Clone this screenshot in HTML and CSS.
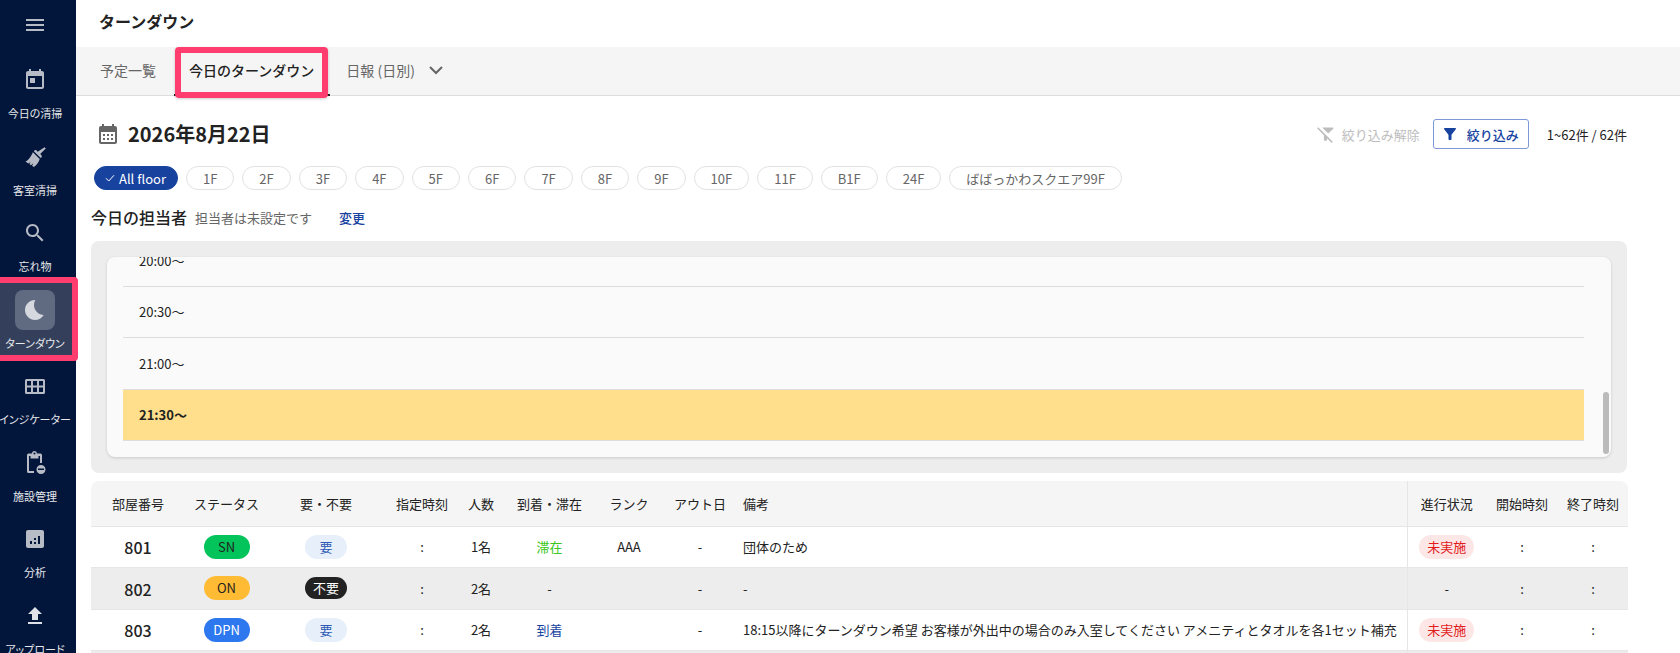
FILE: index.html
```html
<!DOCTYPE html>
<html lang="ja">
<head>
    <meta charset="UTF-8">
    <title>ターンダウン</title>
    <link rel="stylesheet" href="styles.css">
</head>

<body>
<div class="app">
    <nav class="side">
        <div class="side-menu">
            <svg viewBox="0 0 24 24" width="24" height="24"><path d="M3 18h18v-2H3v2zm0-5h18v-2H3v2zm0-7v2h18V6H3z"/></svg>
        </div>
        <a class="side-item">
            <span class="side-icon"><svg viewBox="0 0 24 24" width="24" height="24"><path d="M19 3h-1V1h-2v2H8V1H6v2H5c-1.11 0-2 .9-2 2v14c0 1.1.89 2 2 2h14c1.1 0 2-.9 2-2V5c0-1.1-.9-2-2-2zm0 16H5V8h14v11zM7 10h5v5H7z"/></svg></span>
            <span class="side-label">今日の清掃</span>
        </a>
        <a class="side-item">
            <span class="side-icon"><svg viewBox="0 0 24 24" width="24" height="24"><path d="M21.5 2.2l1.3 1.3-5.6 5.6 1.2 1.2c.6.6.6 1.5 0 2.1l-.7.7-6.9-6.9.7-.7c.6-.6 1.5-.6 2.1 0l1.2 1.2zM9.9 7.3l6.8 6.8c-.7 3.2-3.2 6.4-5.9 7.9l-1.7-1.3 1.3-2.4-2.5 1.9-1.5-1.1 1.3-2.2-2.4 1.6-2.8-2.1c2.3-.7 5.2-3.8 7.4-9.1z"/></svg></span>
            <span class="side-label">客室清掃</span>
        </a>
        <a class="side-item">
            <span class="side-icon"><svg viewBox="0 0 24 24" width="24" height="24"><path d="M15.5 14h-.79l-.28-.27C15.41 12.59 16 11.11 16 9.5 16 5.91 13.09 3 9.5 3S3 5.91 3 9.5 5.91 16 9.5 16c1.61 0 3.09-.59 4.23-1.57l.27.28v.79l5 4.99L20.49 19l-4.99-5zm-6 0C7.01 14 5 11.99 5 9.5S7.01 5 9.5 5 14 7.01 14 9.5 11.99 14 9.5 14z"/></svg></span>
            <span class="side-label">忘れ物</span>
        </a>
        <a class="side-item active">
            <span class="side-icon"><svg viewBox="0 0 24 24" width="24" height="24"><path d="M12.34 2.02C6.59 1.82 2 6.42 2 12c0 5.52 4.48 10 10 10 3.71 0 6.93-2.02 8.66-5.02-7.51-.25-12.09-8.43-8.32-14.96z"/></svg></span>
            <span class="side-label">ターンダウン</span>
        </a>
        <a class="side-item">
            <span class="side-icon"><svg viewBox="0 0 20 15" width="20" height="15"><path fill-rule="evenodd" d="M1.5 0h17A1.5 1.5 0 0 1 20 1.5v12a1.5 1.5 0 0 1-1.5 1.5h-17A1.5 1.5 0 0 1 0 13.5v-12A1.5 1.5 0 0 1 1.5 0zM2 2v4.5h4V2zm6 0v4.5h4V2zm6 0v4.5h4V2zM2 8.5V13h4V8.5zm6 0V13h4V8.5zm6 0V13h4V8.5z"/></svg></span>
            <span class="side-label">インジケーター</span>
        </a>
        <a class="side-item">
            <span class="side-icon"><svg viewBox="0 0 24 24" width="24" height="24"><path fill-rule="evenodd" d="M9 2.5a2.5 2.5 0 0 1 5 0h3.500A1.5 1.5 0 0 1 19 4v8h-2V5h-1.5v2.5h-8V5H6v15h5v2H5.5A1.500 1.500 0 0 1 4 20.500V4a1.500 1.500 0 0 1 1.500-1.500zm2.500-1a1 1 0 1 0 0 2 1 1 0 0 0 0-2z"/><path fill-rule="evenodd" d="M18 14a4.500 4.500 0 1 1 0 9 4.500 4.500 0 0 1 0-9zm-3 3.600v1.400h6v-1.400z"/></svg></span>
            <span class="side-label">施設管理</span>
        </a>
        <a class="side-item">
            <span class="side-icon"><svg viewBox="0 0 24 24" width="24" height="24"><path d="M19 3H5c-1.100 0-2 .9-2 2v14c0 1.100.9 2 2 2h14c1.100 0 2-.9 2-2V5c0-1.100-.9-2-2-2zM9 17H7v-3h2v3zm4 0h-2v-2h2v2zm0-4h-2v-2h2v2zm4 4h-2V9h2v8z"/></svg></span>
            <span class="side-label">分析</span>
        </a>
        <a class="side-item">
            <span class="side-icon"><svg class="upload" viewBox="0 0 24 24" width="24" height="24"><path d="M9 16h6v-6h4l-7-7-7 7h4zm-4 2h14v2H5z"/></svg></span>
            <span class="side-label">アップロード</span>
        </a>
    </nav>

    <div class="main">
        <header class="top">ターンダウン</header>

        <div class="tabs">
            <a class="tab first">予定一覧</a>
            <a class="tab active">今日のターンダウン</a>
            <a class="tab">日報 (日別)
                <svg viewBox="0 0 24 24" width="24" height="24"><path d="M6.700 8.300 12 13.600l5.300-5.300 1.400 1.400L12 16.400 5.300 9.700z"/></svg>
            </a>
        </div>

        <div class="content">
            <div class="date-row">
                <svg class="date-icon" viewBox="0 0 24 24" width="24" height="24"><path d="M19 4h-1V2h-2v2H8V2H6v2H5c-1.110 0-2 .9-2 2v14c0 1.100.89 2 2 2h14c1.100 0 2-.9 2-2V6c0-1.100-.9-2-2-2zm0 16H5V10h14v10zM7 12h2v2H7zm4 0h2v2h-2zm4 0h2v2h-2zM7 16h2v2H7zm4 0h2v2h-2zm4 0h2v2h-2z"/></svg>
                <h1 class="date">2026年8月22日</h1>
                <div class="date-tools">
                    <span class="clear">
                        <svg viewBox="0 0 24 24" width="19" height="19"><path d="M21.800 4.600A1 1 0 0 0 21 3H7.800l7.600 7.600zM2.800 2.800 1.400 4.200 10 13v6c0 .55.45 1 1 1h2c.55 0 1-.45 1-1v-2.200l5.800 5.800 1.400-1.400z"/></svg>
                        絞り込み解除
                    </span>
                    <button class="filter">
                        <svg viewBox="0 0 24 24" width="18" height="18"><path d="M4.250 5.610C6.270 8.200 10 13 10 13v6c0 .55.45 1 1 1h2c.55 0 1-.45 1-1v-6s3.720-4.800 5.740-7.390c.51-.66.04-1.610-.79-1.610H5.040c-.83 0-1.300.95-.79 1.610z"/></svg>
                        絞り込み
                    </button>
                    <span class="count">1~62件 / 62件</span>
                </div>
            </div>

            <div class="chips">
                <span class="chip on">
                    <svg viewBox="0 0 24 24" width="12" height="12"><path d="M4 12.500 9.500 18 20 6.500" fill="none" stroke="#fff" stroke-width="2"/></svg>
                    All floor
                </span>
                <span class="chip">1F</span>
                <span class="chip">2F</span>
                <span class="chip">3F</span>
                <span class="chip">4F</span>
                <span class="chip">5F</span>
                <span class="chip">6F</span>
                <span class="chip">7F</span>
                <span class="chip">8F</span>
                <span class="chip">9F</span>
                <span class="chip">10F</span>
                <span class="chip">11F</span>
                <span class="chip">B1F</span>
                <span class="chip">24F</span>
                <span class="chip">ばばっかわスクエア99F</span>
            </div>

            <div class="staff">
                <span class="staff-title">今日の担当者</span>
                <span class="staff-none">担当者は未設定です</span>
                <a class="staff-change">変更</a>
            </div>

            <div class="panel">
                <div class="times">
                    <div class="time">20:00〜</div>
                    <div class="time">20:30〜</div>
                    <div class="time">21:00〜</div>
                    <div class="time now">21:30〜</div>
                    <span class="scroll"></span>
                </div>
            </div>

            <div class="table-wrap">
                <table class="rooms">
                    <colgroup>
                        <col class="c-room">
                        <col class="c-status">
                        <col class="c-need">
                        <col class="c-time">
                        <col class="c-num">
                        <col class="c-stay">
                        <col class="c-rank">
                        <col class="c-out">
                        <col>
                        <col class="c-prog">
                        <col class="c-start">
                        <col class="c-end">
                    </colgroup>
                    <thead>
                    <tr>
                        <th>部屋番号</th>
                        <th>ステータス</th>
                        <th>要・不要</th>
                        <th>指定時刻</th>
                        <th>人数</th>
                        <th>到着・滞在</th>
                        <th>ランク</th>
                        <th>アウト日</th>
                        <th class="note">備考</th>
                        <th class="split">進行状況</th>
                        <th>開始時刻</th>
                        <th>終了時刻</th>
                    </tr>
                    </thead>
                    <tbody>
                    <tr>
                        <td class="room">801</td>
                        <td><span class="pill sn">SN</span></td>
                        <td><span class="pill need">要</span></td>
                        <td>:</td>
                        <td>1名</td>
                        <td class="stay">滞在</td>
                        <td>AAA</td>
                        <td>-</td>
                        <td class="note">団体のため</td>
                        <td class="split"><span class="pill todo">未実施</span></td>
                        <td>:</td>
                        <td>:</td>
                    </tr>
                    <tr class="off">
                        <td class="room">802</td>
                        <td><span class="pill on-st">ON</span></td>
                        <td><span class="pill noneed">不要</span></td>
                        <td>:</td>
                        <td>2名</td>
                        <td>-</td>
                        <td></td>
                        <td>-</td>
                        <td class="note">-</td>
                        <td class="split">-</td>
                        <td>:</td>
                        <td>:</td>
                    </tr>
                    <tr>
                        <td class="room">803</td>
                        <td><span class="pill dpn">DPN</span></td>
                        <td><span class="pill need">要</span></td>
                        <td>:</td>
                        <td>2名</td>
                        <td class="arrive">到着</td>
                        <td></td>
                        <td>-</td>
                        <td class="note">18:15以降にターンダウン希望 お客様が外出中の場合のみ入室してください アメニティとタオルを各1セット補充</td>
                        <td class="split"><span class="pill todo">未実施</span></td>
                        <td>:</td>
                        <td>:</td>
                    </tr>
                    <tr class="off">
                        <td class="room"></td><td></td><td></td><td></td><td></td><td></td>
                        <td></td><td></td><td class="note"></td><td class="split"></td><td></td><td></td>
                    </tr>
                    </tbody>
                </table>
            </div>
        </div>
    </div>
</div>
</body>
</html>
```

FILE: styles.css
```css
* {
    margin: 0;
    padding: 0;
    box-sizing: border-box;
}

body {
    font-family: "Noto Sans CJK JP", "Noto Sans", sans-serif;
    color: #222;
    background: #fff;
    overflow: hidden;
}

.app {
    display: flex;
    height: 100vh;
    overflow: hidden;
}

/* sidebar */
.side {
    position: relative;
    z-index: 1;
    isolation: isolate;
    flex: 0 0 76px;
    min-width: 0;
    padding-right: 6px;
    background: #02153a;
    display: flex;
    flex-direction: column;
    align-items: center;
}

.side svg {
    fill: #b6bbc6;
    display: block;
}

.side-menu {
    flex: none;
    height: 60px;
    padding-top: 13px;
}

.side-item {
    position: relative;
    width: 100%;
    height: 76.5px;
    flex: none;
    display: flex;
    flex-direction: column;
    align-items: center;
}

.side-icon {
    width: 40px;
    height: 40px;
    flex: none;
    display: flex;
    align-items: center;
    justify-content: center;
    border-radius: 8px;
}

.side-icon .upload {
    fill: #dfe1e6;
}

.side-label {
    margin-top: 5px;
    font-size: 11px;
    line-height: 16px;
    color: #e6e8ec;
    white-space: nowrap;
    font-feature-settings: "palt";
}

.side-item.active .side-icon {
    background: #606a80;
}

.side-item.active svg {
    fill: #d5d8df;
}

/* pink highlight round the current item */
.side-item.active::before {
    content: "";
    position: absolute;
    z-index: -1;
    top: -13px;
    bottom: 5px;
    left: -6px;
    right: -8px;
    border: 6px solid #ff3d6e;
    border-radius: 4px;
    background: #343f5b;
}

/* header + tabs */
.main {
    flex: 1;
    min-width: 0;
    display: flex;
    flex-direction: column;
}

.top {
    height: 47px;
    flex: none;
    padding-left: 23px;
    font-size: 16px;
    font-weight: 700;
    line-height: 43px;
}

.tabs {
    height: 49px;
    flex: none;
    display: flex;
    padding-left: 8px;
    background: #f5f5f5;
    border-bottom: 1px solid #ddd;
}

.tab {
    position: relative;
    display: flex;
    align-items: center;
    padding: 0 16px 2px;
    font-size: 14px;
    color: #666;
}

.tab.first {
    padding-right: 17px;
}

.tab svg {
    margin-left: 9px;
    fill: #666;
}

.tab.active {
    color: #222;
    font-weight: 500;
}

.tab.active::before {
    content: "";
    position: absolute;
    left: 1px;
    right: 0;
    bottom: -1px;
    height: 2px;
    background: #222;
}

.tab.active::after {
    content: "";
    position: absolute;
    top: 0;
    bottom: -3px;
    left: 2px;
    right: 2px;
    border: 6px solid #ff3d6e;
    border-radius: 4px;
    box-shadow: 0 1px 3px rgba(0, 0, 0, .2);
}

/* content */
.content {
    flex: 1;
    padding: 22px 53px 0 15px;
}

.date-row {
    display: flex;
    align-items: center;
    height: 32px;
    padding-left: 5px;
}

.date-icon {
    fill: #666;
    flex: none;
}

.date {
    margin-left: 8px;
    font-size: 20px;
    font-weight: 700;
    line-height: 32px;
}

.date-tools {
    margin-left: auto;
    display: flex;
    align-items: center;
    font-size: 13px;
}

.clear {
    display: flex;
    align-items: center;
    gap: 7px;
    color: #bdbdbd;
}

.clear svg {
    fill: #bdbdbd;
}

.filter {
    margin-left: 13px;
    width: 96px;
    height: 30px;
    padding-right: 2px;
    display: flex;
    align-items: center;
    justify-content: center;
    gap: 8px;
    background: #fff;
    border: 1px solid #7d98d6;
    border-radius: 3px;
    color: #17439f;
    font: 500 13px "Noto Sans CJK JP", sans-serif;
}

.filter svg {
    fill: #17439f;
}

.count {
    margin-left: 18px;
}

.chips {
    display: flex;
    gap: 8px;
    margin-top: 16px;
    padding-left: 3px;
}

.chip {
    height: 24px;
    padding: 0 16px;
    display: flex;
    align-items: center;
    border: 1px solid #e2e2e2;
    border-radius: 12px;
    font-size: 13px;
    color: #666;
}

.chip.on {
    gap: 3px;
    padding: 0 11px 0 9px;
    background: #17439f;
    border-color: #17439f;
    color: #fff;
}

.staff {
    display: flex;
    align-items: center;
    height: 24px;
    margin-top: 15px;
}

.staff-title {
    font-size: 16px;
    font-weight: 500;
}

.staff-none {
    margin-left: 8px;
    font-size: 13px;
    color: #666;
}

.staff-change {
    margin-left: 27px;
    font-size: 13px;
    font-weight: 500;
    color: #17439f;
}

.panel {
    margin-top: 12px;
    height: 232px;
    padding: 16px;
    background: #ededed;
    border-radius: 8px;
}

.times {
    position: relative;
    height: 200px;
    display: flex;
    flex-direction: column;
    justify-content: flex-end;
    overflow: hidden;
    padding: 0 27px 16px 16px;
    background: #fafafa;
    border-radius: 8px;
    box-shadow: 0 1px 3px rgba(0, 0, 0, .15);
}

.time {
    flex: none;
    height: 51.5px;
    padding-left: 16px;
    display: flex;
    align-items: center;
    font-size: 13px;
    border-bottom: 1px solid #ddd;
}

.time.now {
    background: #ffdf8b;
    font-weight: 700;
}

.scroll {
    position: absolute;
    right: 2px;
    bottom: 3px;
    width: 6px;
    height: 62px;
    background: #bbb;
    border-radius: 3px;
}

/* room table */
.table-wrap {
    margin: 8px -1px 0 0;
    border-radius: 8px 8px 0 0;
    overflow: hidden;
}

.rooms {
    width: 100%;
    table-layout: fixed;
    border-collapse: collapse;
    font-size: 13px;
}

.c-room { width: 94px; }
.c-status { width: 83px; }
.c-need { width: 116px; }
.c-time { width: 76px; }
.c-num { width: 42px; }
.c-stay { width: 95px; }
.c-rank { width: 64px; }
.c-out { width: 78px; }
.c-prog { width: 79px; }
.c-start { width: 72px; }
.c-end { width: 70px; }

.rooms th {
    height: 45px;
    background: #f5f5f5;
    font-weight: 400;
    white-space: nowrap;
    border-bottom: 1px solid #e6e6e6;
}

.rooms td {
    height: 41px;
    text-align: center;
    border-bottom: 1px solid #e6e6e6;
    white-space: nowrap;
}

.rooms .note {
    text-align: left;
    padding-left: 4px;
}

.rooms .split {
    border-left: 1px solid #e6e6e6;
    text-align: center;
}

.rooms .off td {
    height: 42px;
    background: #ededed;
}

.rooms .room {
    font-size: 16px;
    font-weight: 500;
    padding-top: 1px;
}

.pill {
    display: inline-block;
    height: 24px;
    line-height: 24px;
    border-radius: 12px;
    font-size: 13px;
    vertical-align: middle;
}

.sn, .on-st, .dpn {
    width: 46px;
}

.sn { background: #02c45a; color: #222; }
.on-st { background: #ffbb33; color: #222; }
.dpn { background: #2d78ee; color: #fff; }

.need, .noneed {
    width: 42px;
}

.need { background: #e7f0fa; color: #2f5bb5; }
.noneed { background: #222; color: #fff; height: 22px; line-height: 22px; }

.todo {
    width: 55px;
    background: #fde6e6;
    color: #e21b1b;
}

.stay { color: #3cc622; }
.arrive { color: #17439f; }
```
